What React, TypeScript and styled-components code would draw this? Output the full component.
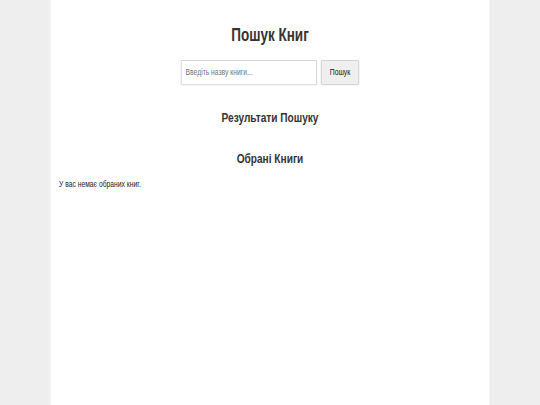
import React from "react";
import styled, { createGlobalStyle } from "styled-components";

const GlobalStyle = createGlobalStyle`
  html, body {
    margin: 0;
    padding: 0;
    background: #eeeeee;
    overflow: hidden;
  }
  body {
    font-family: "Liberation Sans", Arial, sans-serif;
  }
`;

/* Window-sized frame that clips the scaled page. */
const Viewport = styled.div`
  width: 540px;
  height: 405px;
  overflow: hidden;
  background: #eeeeee;
`;

/* The reference is a 1280x720 page photographed into 540x405,
   so the page is drawn at its own size and scaled into the window. */
const Stage = styled.div`
  width: 1280px;
  height: 720px;
  transform: scale(0.421875, 0.5625);
  transform-origin: 0 0;
  background: #eeeeee;
  overflow: hidden;
`;

const Container = styled.main`
  box-sizing: border-box;
  max-width: 1040px;
  min-height: 720px;
  margin: 0 auto;
  padding: 20px;
  background: #ffffff;
  color: #333333;
`;

const Title = styled.h1`
  margin: 24px 0 0;
  font-size: 32px;
  font-weight: bold;
  line-height: normal;
  text-align: center;
  color: #333333;
`;

const SearchForm = styled.form`
  display: flex;
  justify-content: center;
  gap: 10px;
  margin-top: 26px;
`;

const SearchInput = styled.input`
  box-sizing: border-box;
  width: 322px;
  height: 44px;
  padding: 10px;
  border: 1px solid #aaaaaa;
  border-radius: 2px;
  font-family: "Liberation Sans", Arial, sans-serif;
  font-size: 16px;
  color: #333333;
  background: #ffffff;
  &::placeholder {
    color: #757575;
  }
`;

const SearchButton = styled.button`
  box-sizing: border-box;
  height: 44px;
  padding: 0 20px;
  border: 1px solid #aaaaaa;
  border-radius: 3px;
  background: #efefef;
  font-family: "Liberation Sans", Arial, sans-serif;
  font-size: 16px;
  color: #111111;
`;

const SectionTitle = styled.h2<{ $gap: number }>`
  margin: ${(p) => p.$gap}px 0 0;
  font-size: 24px;
  font-weight: bold;
  line-height: normal;
  text-align: center;
  color: #333333;
`;

const Message = styled.p`
  margin: 23px 0 0;
  font-size: 16px;
  line-height: normal;
  color: #222222;
`;

export default function App() {
  return (
    <>
      <GlobalStyle />
      <Viewport>
        <Stage>
          <Container>
            <Title>Пошук Книг</Title>
            <SearchForm onSubmit={(e) => e.preventDefault()}>
              <SearchInput type="text" placeholder="Введіть назву книги..." />
              <SearchButton type="submit">Пошук</SearchButton>
            </SearchForm>
            <SectionTitle $gap={44}>Результати Пошуку</SectionTitle>
            <SectionTitle $gap={44}>Обрані Книги</SectionTitle>
            <Message>У вас немає обраних книг.</Message>
          </Container>
        </Stage>
      </Viewport>
    </>
  );
}
